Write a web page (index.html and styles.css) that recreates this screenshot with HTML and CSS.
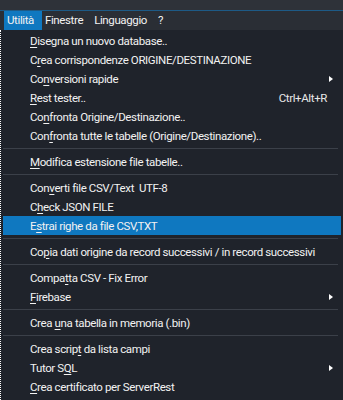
FILE: index.html
```html
<!DOCTYPE html>
<html lang="it">
<head>
    <meta charset="UTF-8">
    <title>Utilità</title>
    <link rel="stylesheet" href="styles.css">
</head>
<body>

<div class="titlebar"></div>

<div class="menubar">
    <span class="menubar-item active">Utilità</span>
    <span class="menubar-item">Finestre</span>
    <span class="menubar-item">Linguaggio</span>
    <span class="menubar-item">?</span>
</div>

<div class="menu">
    <div class="item"><span class="label"><u>D</u>isegna un nuovo database..</span></div>
    <div class="item"><span class="label">C<u>r</u>ea corrispondenze ORIGINE/DESTINAZIONE</span></div>
    <div class="item"><span class="label">Co<u>n</u>versioni rapide</span><span class="arrow"></span></div>
    <div class="item"><span class="label"><u>R</u>est tester..</span><span class="shortcut">Ctrl+Alt+R</span></div>
    <div class="item"><span class="label">Co<u>n</u>fronta Origine/Destinazione..</span></div>
    <div class="item"><span class="label">Con<u>f</u>ronta tutte le tabelle (Origine/Destinazione)..</span></div>
    <div class="separator"></div>
    <div class="item"><span class="label"><u>M</u>odifica estensione file tabelle..</span></div>
    <div class="separator"></div>
    <div class="item"><span class="label">Con<u>v</u>erti file CSV/Text&nbsp; UTF-8</span></div>
    <div class="item"><span class="label">C<u>h</u>eck JSON FILE</span></div>
    <div class="item selected"><span class="label">E<u>s</u>trai righe da file CSV,TXT</span></div>
    <div class="separator"></div>
    <div class="item"><span class="label">Co<u>p</u>ia dati origine da record successivi / in record successivi</span></div>
    <div class="separator"></div>
    <div class="item"><span class="label">Compa<u>t</u>ta CSV - Fix Error</span></div>
    <div class="item"><span class="label"><u>F</u>irebase</span><span class="arrow"></span></div>
    <div class="separator"></div>
    <div class="item"><span class="label">Crea <u>u</u>na tabella in memoria (.bin)</span></div>
    <div class="separator"></div>
    <div class="item"><span class="label">Crea scrip<u>t</u> da lista campi</span></div>
    <div class="item"><span class="label">Tutor S<u>Q</u>L</span><span class="arrow"></span></div>
    <div class="item"><span class="label"><u>C</u>rea certificato per ServerRest</span></div>
</div>

</body>
</html>
```

FILE: styles.css
```css
body {
    margin: 0;
    height: 400px;
    display: flex;
    flex-direction: column;
    background-color: #1f232b;
    font-family: Roboto, "Liberation Sans", sans-serif;
    font-size: 11.5px;
    letter-spacing: -0.38px;
    color: #f2f2f2;
    overflow: hidden;
}

.titlebar {
    height: 10px;
    flex-shrink: 0;
    background: #2e3239;
    border-bottom: 1px solid #1d5a86;
}

.menubar {
    display: flex;
    flex-shrink: 0;
    height: 19px;
    padding-left: 4px;
    background: #2a2e35;
}
.menubar-item {
    padding: 0 8px 0 3px;
    line-height: 18px;
}
.menubar-item.active {
    background: #0f78c0;
}

.menu {
    flex: 1;
    padding-top: 1px;
    border-left: 1px dotted #ffffff;
}

.item {
    display: flex;
    align-items: center;
    height: 19px;
    margin: 0 2px;
    padding: 0 8px 0 27px;
}
.item .label {
    flex: 1;
    white-space: nowrap;
}
.item u {
    text-decoration-thickness: 1px;
    text-underline-offset: 2px;
}
.item.selected {
    background: #0f78c0;
}
.shortcut {
    color: #e8e8e8;
    padding-right: 6px;
}
.arrow {
    width: 0;
    height: 0;
    border-top: 3px solid transparent;
    border-bottom: 3px solid transparent;
    border-left: 4px solid #ffffff;
}

.separator {
    height: 1px;
    margin: 3px 5px 3px 2px;
    background: #3b4049;
}
```
